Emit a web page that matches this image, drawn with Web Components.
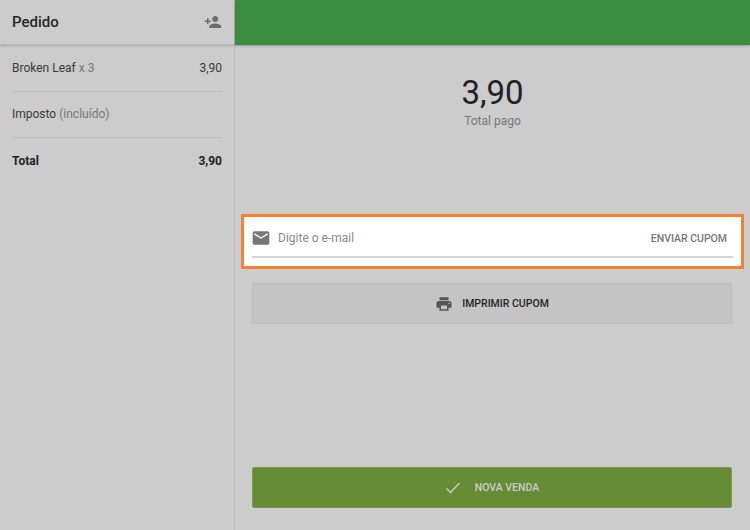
<!DOCTYPE html>
<html>
<head>
<meta charset="utf-8">
<title>Pedido</title>
<style>
  html, body { margin: 0; padding: 0; height: 100%; overflow: hidden; background: #ccc; }
  body { font-family: Roboto, "Liberation Sans", sans-serif; color: #222; }
</style>
</head>
<body>
<sale-screen>
  <order-panel slot="side" title="Pedido">
    <order-row amount="3,90">Broken Leaf <span style="color:#777">x 3</span></order-row>
    <order-row>Imposto <span style="color:#777">(incluído)</span></order-row>
    <order-row amount="3,90" total>Total</order-row>
  </order-panel>
  <payment-panel slot="main" total="3,90" label="Total pago"></payment-panel>
</sale-screen>

<script>
class SaleScreen extends HTMLElement {
  constructor(){
    super();
    this.attachShadow({mode: 'open'}).innerHTML = `
      <style>
        :host { display: flex; width: 750px; height: 530px; background: #ccc; }
        .side { width: 234px; flex: none; border-right: 1px solid #bbb; }
        .main { flex: 1; min-width: 0; }
      </style>
      <div class="side"><slot name="side"></slot></div>
      <div class="main"><slot name="main"></slot></div>
    `;
  }
}

class OrderPanel extends HTMLElement {
  constructor(){
    super();
    this.attachShadow({mode: 'open'}).innerHTML = `
      <style>
        :host { display: block; }
        header {
          height: 45px; box-sizing: border-box; padding: 0 12px;
          display: flex; align-items: center; justify-content: space-between;
          background: #ccc; border-bottom: 1px solid #b9b9b9;
          box-shadow: 0 1px 2px rgba(0,0,0,.18);
          font-size: 15px; font-weight: 500; color: #262626;
        }
        svg { width: 18px; height: 18px; fill: #6b6b6b; display: block; }
        .rows { padding: 0 12px; }
      </style>
      <header>
        <span>${this.getAttribute('title')}</span>
        <svg viewBox="0 0 24 24"><path d="M15 12c2.21 0 4-1.79 4-4s-1.79-4-4-4-4 1.79-4 4 1.79 4 4 4zm-9-2V7H4v3H1v2h3v3h2v-3h3v-2H6zm9 4c-2.67 0-8 1.34-8 4v2h16v-2c0-2.66-5.33-4-8-4z"/></svg>
      </header>
      <div class="rows"><slot></slot></div>
    `;
  }
}

class OrderRow extends HTMLElement {
  constructor(){
    super();
    const amount = this.getAttribute('amount') || '';
    this.attachShadow({mode: 'open'}).innerHTML = `
      <style>
        :host {
          display: flex; justify-content: space-between; align-items: center;
          height: 46.5px; box-sizing: border-box;
          border-bottom: 1px solid #bcbcbc;
          font-size: 12px; color: #3a3a3a;
        }
        :host(:last-child) { border-bottom: 0; }
        :host([total]) { font-weight: 700; color: #222; }
      </style>
      <span><slot></slot></span>
      <span>${amount}</span>
    `;
  }
}

class EmailCoupon extends HTMLElement {
  constructor(){
    super();
    this.attachShadow({mode: 'open'}).innerHTML = `
      <style>
        :host {
          display: block; box-sizing: border-box; height: 55px;
          border: 3px solid #f58233; background: #fff; padding: 0 8px;
        }
        .line {
          height: 41px; box-sizing: border-box; border-bottom: 2px solid #d4d4d4;
          display: flex; align-items: center; padding-top: 3px;
          font-size: 12px; color: #8a8a8a;
        }
        svg { width: 20px; height: 20px; fill: #777; margin-right: 7px; margin-left: -1px; flex: none; }
        .hint { flex: 1; }
        .send { font-size: 10.5px; font-weight: 500; color: #777; margin-right: 6px; }
      </style>
      <div class="line">
        <svg viewBox="0 0 24 24"><path d="M20 4H4c-1.1 0-2 .9-2 2v12c0 1.1.9 2 2 2h16c1.1 0 2-.9 2-2V6c0-1.1-.9-2-2-2zm0 4l-8 5-8-5V6l8 5 8-5v2z"/></svg>
        <span class="hint">Digite o e-mail</span>
        <span class="send">ENVIAR CUPOM</span>
      </div>
    `;
  }
}

class ActionButton extends HTMLElement {
  constructor(){
    super();
    this.attachShadow({mode: 'open'}).innerHTML = `
      <style>
        :host {
          display: flex; align-items: center; justify-content: center; gap: 9px;
          height: 41px; box-sizing: border-box; border-radius: 2px;
          background: #c4c4c4; border: 1px solid #bbb;
          font-size: 10.5px; font-weight: 500; color: #262626;
        }
        :host([primary]) { background: #668d35; border-color: #7a9a52; color: #ccc; gap: 14px; }
        ::slotted(svg) { display: block; }
      </style>
      <slot name="icon"></slot><span><slot></slot></span>
    `;
  }
}

class PaymentPanel extends HTMLElement {
  constructor(){
    super();
    this.attachShadow({mode: 'open'}).innerHTML = `
      <style>
        :host { display: flex; flex-direction: column; height: 530px; }
        .bar { height: 45px; flex: none; background: #3b8e3f; box-shadow: 0 1px 2px rgba(0,0,0,.25); }
        .summary { text-align: center; height: 169px; flex: none; box-sizing: border-box; padding-top: 28px; }
        .value { font-size: 33px; line-height: 40px; color: #222; }
        .label { font-size: 12px; line-height: 16px; color: #777; margin-top: 0; }
        .body { padding: 0 6px; }
        .actions { flex: 1; display: flex; flex-direction: column; padding: 14px 18px 22px 17px; }
        .spacer { flex: 1; }
      </style>
      <div class="bar"></div>
      <div class="summary">
        <div class="value">${this.getAttribute('total')}</div>
        <div class="label">${this.getAttribute('label')}</div>
      </div>
      <div class="body"><email-coupon></email-coupon></div>
      <div class="actions">
        <action-button>
          <svg slot="icon" width="18" height="18" viewBox="0 0 24 24" fill="#555"><path d="M19 8H5c-1.66 0-3 1.34-3 3v6h4v4h12v-4h4v-6c0-1.66-1.34-3-3-3zm-3 11H8v-5h8v5zm3-7c-.55 0-1-.45-1-1s.45-1 1-1 1 .45 1 1-.45 1-1 1zm-1-9H6v4h12V3z"/></svg>
          IMPRIMIR CUPOM
        </action-button>
        <div class="spacer"></div>
        <action-button primary>
          <svg slot="icon" width="16" height="16" viewBox="0 0 16 16" fill="none" stroke="#ccc" stroke-width="1.4"><path d="M1.5 8.5l4 4L14.5 3"/></svg>
          NOVA VENDA
        </action-button>
      </div>
    `;
  }
}

customElements.define('sale-screen', SaleScreen);
customElements.define('order-panel', OrderPanel);
customElements.define('order-row', OrderRow);
customElements.define('email-coupon', EmailCoupon);
customElements.define('action-button', ActionButton);
customElements.define('payment-panel', PaymentPanel);
</script>
</body>
</html>
